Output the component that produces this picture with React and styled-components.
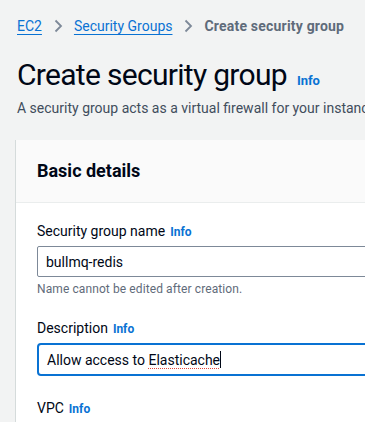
import React from "react";
import styled, { createGlobalStyle } from "styled-components";

const Global = createGlobalStyle`
  html, body {
    margin: 0;
    padding: 0;
    background: #f2f3f3;
    overflow: hidden;
  }
  body {
    font-family: Roboto, "Noto Sans", sans-serif;
    color: #000716;
  }
`;

const Page = styled.div`
  padding: 14px 0 0 17px;
  width: 600px;
`;

const Crumbs = styled.nav`
  display: flex;
  align-items: center;
  height: 24px;
  font-size: 14px;
`;

const Crumb = styled.a`
  color: ${(p) => (p.current ? "#5f6b7a" : "#0972d3")};
  font-weight: ${(p) => (p.current ? 700 : 400)};
  text-decoration: ${(p) => (p.current ? "none" : "underline")};
  text-underline-offset: 3px;
  letter-spacing: ${(p) => (p.current ? "0.2px" : "0")};
`;

const Sep = styled.svg`
  width: 16px;
  height: 16px;
  margin: 0 8px;
`;

const TitleRow = styled.div`
  display: flex;
  align-items: baseline;
  margin-top: 18px;
`;

const Title = styled.h1`
  margin: 0;
  font-size: 30px;
  font-weight: 400;
  line-height: 38px;
  letter-spacing: -0.7px;
`;

const Info = styled.span`
  color: #0972d3;
  font-weight: 700;
  font-size: ${(p) => (p.small ? "12px" : "13px")};
  margin-left: ${(p) => (p.small ? "5px" : "10px")};
`;

const Lead = styled.p`
  margin: 4px 0 0;
  font-size: 14px;
  line-height: 20px;
  color: #414d5c;
  white-space: nowrap;
`;

const Card = styled.section`
  margin: 22px 0 0 -1px;
  background: #fff;
  box-shadow: -1px 0 0 #d5dbdb, 0 1px 1px rgba(0, 7, 22, 0.12);
`;

const CardHead = styled.header`
  background: #fafafa;
  border-bottom: 1px solid #eaeded;
  padding: 20px 20px 0 21px;
  height: 42px;
`;

const CardTitle = styled.h2`
  margin: 0;
  font-size: 18px;
  font-weight: 700;
  line-height: 22px;
`;

const CardBody = styled.div`
  padding: 17px 20px 0 21px;
`;

const Field = styled.div`
  display: flex;
  flex-direction: column;
  margin-bottom: ${(p) => p.gap || "20px"};
`;

const Label = styled.label`
  font-size: 14px;
  line-height: 22px;
  margin-bottom: 3px;
  display: flex;
  align-items: baseline;
`;

const Input = styled.div`
  box-sizing: border-box;
  height: ${(p) => (p.focused ? "33px" : "31px")};
  border: ${(p) => (p.focused ? "2px solid #0972d3" : "1px solid #7d8998")};
  border-radius: ${(p) => (p.focused ? "4px" : "2px")};
  padding: 0 8px;
  display: flex;
  align-items: center;
  font-size: 14px;
  color: #000716;
  background: #fff;
`;

const Squiggle = styled.span`
  text-decoration: underline dotted #e0473c;
  text-underline-offset: 3px;
  text-decoration-thickness: 1px;
`;

const Caret = styled.span`
  display: inline-block;
  width: 1px;
  height: 17px;
  background: #000716;
`;

const Hint = styled.div`
  font-size: 12px;
  line-height: 16px;
  color: #5f6b7a;
  margin-top: 4px;
  letter-spacing: 0.1px;
`;

const Chevron = () => (
  <Sep viewBox="0 0 16 16">
    <path d="M5.5 2.5 11 8l-5.5 5.5" fill="none" stroke="#7d8998" strokeWidth="1.8" />
  </Sep>
);

export default function App() {
  return (
    <>
      <Global />
      <Page>
        <Crumbs>
          <Crumb>EC2</Crumb>
          <Chevron />
          <Crumb>Security Groups</Crumb>
          <Chevron />
          <Crumb current>Create security group</Crumb>
        </Crumbs>
        <TitleRow>
          <Title>Create security group</Title>
          <Info>Info</Info>
        </TitleRow>
        <Lead>A security group acts as a virtual firewall for your instance to control inbound and outbound traffic.</Lead>
        <Card>
          <CardHead>
            <CardTitle>Basic details</CardTitle>
          </CardHead>
          <CardBody>
            <Field>
              <Label>
                Security group name<Info small>Info</Info>
              </Label>
              <Input>bullmq-redis</Input>
              <Hint>Name cannot be edited after creation.</Hint>
            </Field>
            <Field gap="21px">
              <Label>
                Description<Info small>Info</Info>
              </Label>
              <Input focused>
                Allow access to&nbsp;<Squiggle>Elasticache</Squiggle>
                <Caret />
              </Input>
            </Field>
            <Field>
              <Label>
                VPC<Info small>Info</Info>
              </Label>
            </Field>
          </CardBody>
        </Card>
      </Page>
    </>
  );
}
